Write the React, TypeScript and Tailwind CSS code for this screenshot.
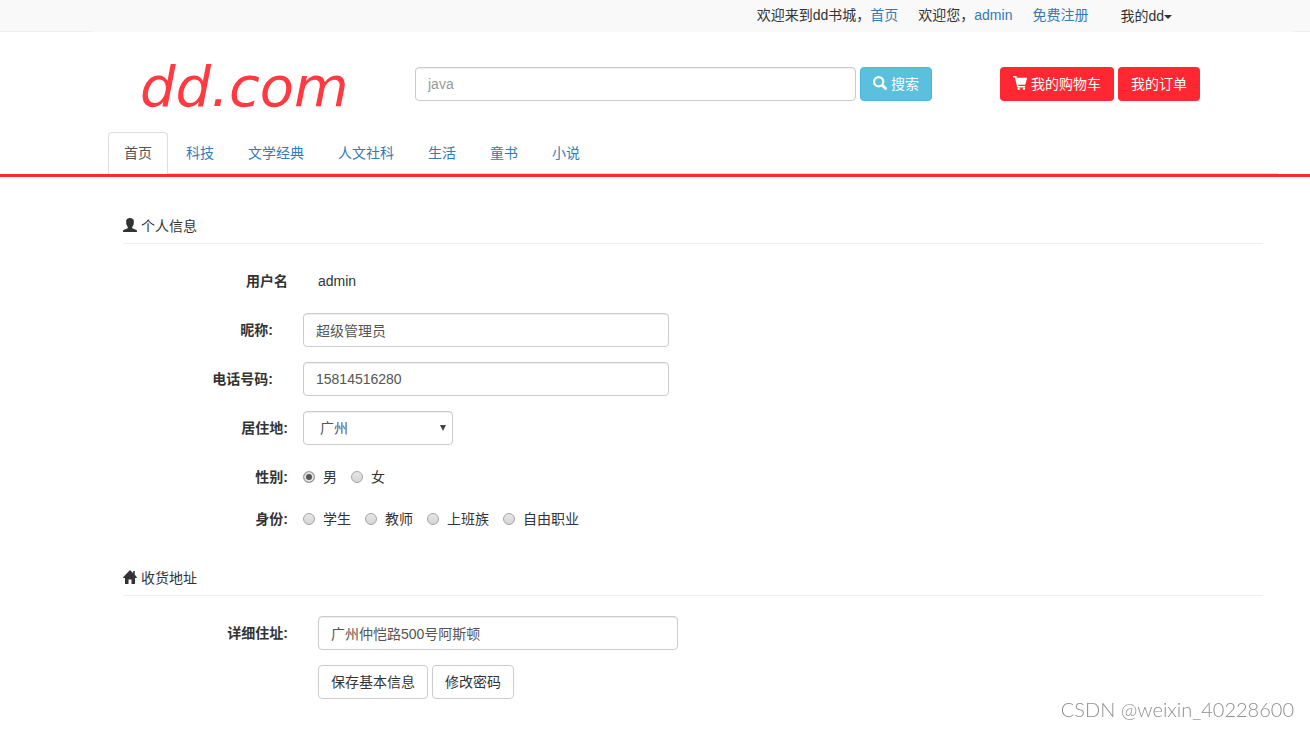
import React from 'react';

const categories = ['首页', '科技', '文学经典', '人文社科', '生活', '童书', '小说'];

const inputClass =
  'h-[34px] rounded border border-[#ccc] bg-white px-3 text-sm text-[#555] shadow-[inset_0_1px_1px_rgba(0,0,0,0.075)] outline-none focus:border-[#66afe9]';

const radioClass =
  'size-3 appearance-none rounded-full border border-[#a5a5a5] bg-linear-to-b from-[#e6e6e6] to-[#d6d6d6] checked:bg-[#555] checked:bg-none checked:shadow-[inset_0_0_0_2px_#e4e4e4]';

const iconClass = '-mt-0.5 size-3.5 shrink-0';

const SearchIcon = () => (
  <svg viewBox="0 0 14 14" className={iconClass} aria-hidden="true">
    <circle cx="5.7" cy="5.7" r="4.6" fill="none" stroke="currentColor" strokeWidth="2.2" />
    <path d="M9.2 9.200l3.400 3.400" stroke="currentColor" strokeWidth="2.8" strokeLinecap="round" />
  </svg>
);

const CartIcon = () => (
  <svg viewBox="0 0 14 14" className={iconClass} fill="currentColor" aria-hidden="true">
    <path d="M.5 0h2.300c.4 0 .6.2.7.5l.4 1.300h9.600c.4 0 .6.3.5.7l-1.600 5.700c-.1.4-.3.6-.7.6H5.200l.3 1.200h6.200c.9 0 .9 1.400 0 1.400H4.800c-.4 0-.6-.2-.7-.5L2 1.400H.5C-.2 1.400-.2 0 .5 0z" />
    <circle cx="5.700" cy="12.700" r="1.200" />
    <circle cx="10.900" cy="12.700" r="1.200" />
  </svg>
);

const UserIcon = () => (
  <svg viewBox="0 0 14 14" className={iconClass} fill="currentColor" aria-hidden="true">
    <path d="M7 0c2.500 0 3.900 1.300 3.900 3.600 0 .6-.1 1.100-.2 1.600.4.5.1 1.400-.4 1.600-.2.9-.6 1.600-1.100 2.100v.8c0 .4.2.6.6.8l3.200 1.200c.7.3 1 .6 1 1.200V14H0v-1.100c0-.6.3-.9 1-1.200l3.200-1.200c.4-.2.6-.4.6-.8v-.8c-.5-.5-.9-1.200-1.100-2.100-.5-.2-.8-1.100-.4-1.600-.1-.5-.2-1-.2-1.600C3.100 1.300 4.500 0 7 0z" />
  </svg>
);

const HomeIcon = () => (
  <svg viewBox="0 0 14 14" className={iconClass} fill="currentColor" aria-hidden="true">
    <path d="M7 0l3.200 3.200V1h1.600v3.800l2.100 2.500c.2.400 0 .7-.4.7H12v6H8.500V9.500h-3V14H2V8H.5C.1 8-.1 7.700.1 7.300z" />
  </svg>
);

const Legend = ({ icon, text }: { icon: React.ReactNode; text: string }) => (
  <h2 className="mb-5 flex items-center gap-1 border-b border-[#eee] pb-[7px]">
    {icon}
    {text}
  </h2>
);

const Radio = ({ name, label, checked }: { name: string; label: string; checked?: boolean }) => (
  <label className="flex items-center gap-2">
    <input type="radio" name={name} defaultChecked={checked} className={radioClass} />
    {label}
  </label>
);

const App: React.FC = () => {
  return (
    <div className="bg-white font-['Liberation_Sans','Noto_Sans_CJK_SC',sans-serif] text-sm leading-5 text-[#333]">
      <div className="h-8 border-b border-[#f0f0f0] bg-[#f9f9f9]">
        <div className="mr-[17px] ml-[93px] flex h-8 items-center justify-end bg-[#f9f9f9] pr-[121px] pb-0.5">
          <span>欢迎来到dd书城，</span>
          <a href="#" className="mr-5 text-[#337ab7]">首页</a>
          <span>欢迎您，</span>
          <a href="#" className="mr-5 text-[#337ab7]">admin</a>
          <a href="#" className="mr-8 text-[#337ab7]">免费注册</a>
          <button type="button" className="flex items-center pt-0.5">
            我的dd
            <svg viewBox="0 0 8 4" className="mt-0.5 h-1 w-2" fill="currentColor" aria-hidden="true">
              <path d="M0 0h8L4 4z" />
            </svg>
          </button>
        </div>
      </div>

      <header className="border-b-[3px] border-[#ff2832]">
        <div className="mr-8 ml-[108px]">
          <div className="flex h-[100px] items-start pt-[35px] pr-[78px]">
            <a
              href="#"
              className="w-[307px] shrink-0 pl-8 font-['DejaVu_Sans',sans-serif] text-[56px] leading-10 text-[#ff3a40] italic"
            >
              dd.com
            </a>
            <form className="mr-[68px] flex flex-1 gap-1" onSubmit={(e) => e.preventDefault()}>
              <input
                type="text"
                placeholder="java"
                aria-label="搜索"
                className={`${inputClass} min-w-0 flex-1 placeholder:text-[#999]`}
              />
              <button
                type="submit"
                className="flex h-[34px] items-center gap-1 rounded border border-[#46b8da] bg-[#5bc0de] px-3 text-white"
              >
                <SearchIcon />
                搜索
              </button>
            </form>
            <div className="flex gap-1">
              <button type="button" className="flex h-[34px] items-center gap-1 rounded bg-[#ff2832] px-[13px] text-white">
                <CartIcon />
                我的购物车
              </button>
              <button type="button" className="h-[34px] rounded bg-[#ff2832] px-[13px] text-white">
                我的订单
              </button>
            </div>
          </div>

          <nav className="flex gap-0.5 border-b border-[#ddd]">
            {categories.map((name, index) => (
              <a
                key={name}
                href="#"
                className={
                  index === 0
                    ? '-mb-px rounded-t border border-b-0 border-[#ddd] bg-white px-[15px] pt-2.5 pb-[11px] text-[#555]'
                    : 'px-4 pt-[11px] pb-2.5 text-[#337ab7]'
                }
              >
                {name}
              </a>
            ))}
          </nav>
        </div>
      </header>

      <main className="mr-[47px] ml-[123px] pt-[39px] pb-[30px]">
        <section className="mb-6">
          <Legend icon={<UserIcon />} text="个人信息" />
          <div className="grid grid-cols-[180px_1fr] gap-y-[15px]">
            <span className="pr-[15px] text-right leading-[34px] font-bold">用户名</span>
            <span className="pl-[15px] leading-[34px]">admin</span>

            <label htmlFor="nickname" className="pr-[30px] text-right leading-[34px] font-bold">昵称:</label>
            <input id="nickname" type="text" defaultValue="超级管理员" className={`${inputClass} w-[366px]`} />

            <label htmlFor="phone" className="pr-[30px] text-right leading-[34px] font-bold">电话号码:</label>
            <input id="phone" type="text" defaultValue="15814516280" className={`${inputClass} w-[366px]`} />

            <label htmlFor="city" className="pr-[15px] text-right leading-[34px] font-bold">居住地:</label>
            <div className="relative w-[150px]">
              <select id="city" className={`${inputClass} w-full appearance-none pl-4`}>
                <option>广州</option>
                <option>深圳</option>
              </select>
              <svg
                viewBox="0 0 6 6"
                className="pointer-events-none absolute top-3.5 right-[7px] size-1.5"
                fill="#444"
                aria-hidden="true"
              >
                <path d="M0 0h6L3 6z" />
              </svg>
            </div>

            <span className="pt-[7px] pr-[15px] text-right font-bold">性别:</span>
            <div role="radiogroup" aria-label="性别" className="flex gap-3.5 pt-[7px]">
              <Radio name="gender" label="男" checked />
              <Radio name="gender" label="女" />
            </div>

            <span className="pt-[7px] pr-[15px] text-right font-bold">身份:</span>
            <div role="radiogroup" aria-label="身份" className="flex gap-3.5 pt-[7px]">
              <Radio name="identity" label="学生" />
              <Radio name="identity" label="教师" />
              <Radio name="identity" label="上班族" />
              <Radio name="identity" label="自由职业" />
            </div>
          </div>
        </section>

        <section className="pt-[15px]">
          <Legend icon={<HomeIcon />} text="收货地址" />
          <div className="grid grid-cols-[195px_1fr] gap-y-[15px]">
            <label htmlFor="address" className="pr-[30px] text-right leading-[34px] font-bold">详细住址:</label>
            <input id="address" type="text" defaultValue="广州仲恺路500号阿斯顿" className={`${inputClass} w-[360px]`} />
            <div className="col-start-2 flex gap-1">
              <button type="submit" className="h-[34px] rounded border border-[#ccc] bg-white px-3">
                保存基本信息
              </button>
              <button type="button" className="h-[34px] rounded border border-[#ccc] bg-white px-3">
                修改密码
              </button>
            </div>
          </div>
        </section>
      </main>

      <div className="pointer-events-none fixed right-4 bottom-2.5 font-['Lato',sans-serif] text-[20px] leading-5 font-light text-[#8f8f8f]">
        CSDN @weixin_40228600
      </div>
    </div>
  );
};

export default App;
